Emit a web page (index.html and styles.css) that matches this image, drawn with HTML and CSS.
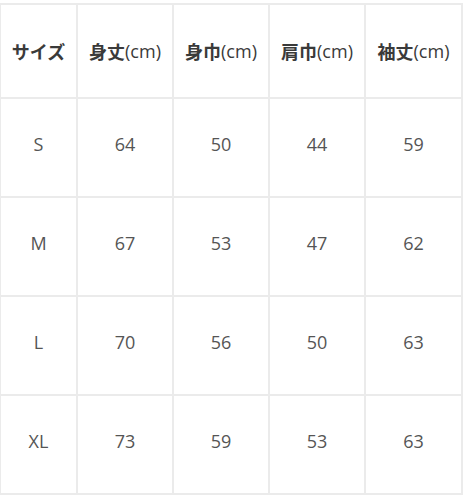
FILE: index.html
```html
<!DOCTYPE html>
<html lang="ja">
<head>
<meta charset="utf-8">
<link rel="stylesheet" href="styles.css">
</head>
<body>
<div class="size-table">
  <div class="cell head">サイズ</div>
  <div class="cell head">身丈<span class="unit">(cm)</span></div>
  <div class="cell head">身巾<span class="unit">(cm)</span></div>
  <div class="cell head">肩巾<span class="unit">(cm)</span></div>
  <div class="cell head">袖丈<span class="unit">(cm)</span></div>

  <div class="cell">S</div><div class="cell">64</div><div class="cell">50</div><div class="cell">44</div><div class="cell">59</div>
  <div class="cell">M</div><div class="cell">67</div><div class="cell">53</div><div class="cell">47</div><div class="cell">62</div>
  <div class="cell">L</div><div class="cell">70</div><div class="cell">56</div><div class="cell">50</div><div class="cell">63</div>
  <div class="cell">XL</div><div class="cell">73</div><div class="cell">59</div><div class="cell">53</div><div class="cell">63</div>
</div>
</body>
</html>
```
FILE: styles.css
```css
html, body {
  margin: 0;
  padding: 0;
  background: #ffffff;
}
.size-table {
  margin-top: 3px;
  display: grid;
  grid-template-columns: 77px 96px 96px 96px 97px;
  grid-template-rows: 94px 99px 99px 99px 99px;
  width: 463px;
  box-sizing: border-box;
  border-top: 2px solid #ebebeb;
  border-left: 1px solid #ebebeb;
  font-family: "Open Sans", "Noto Sans CJK JP", sans-serif;
  font-size: 18px;
  line-height: 1;
  color: #555555;
}
.cell {
  box-sizing: border-box;
  border-right: 2px solid #ebebeb;
  border-bottom: 2px solid #ebebeb;
  display: flex;
  align-items: center;
  justify-content: center;
  white-space: nowrap;
  padding-bottom: 7px;
}
.head {
  font-family: "Noto Sans CJK JP", sans-serif;
  font-weight: 700;
  color: #3a3a3a;
  font-size: 18px;
  padding-bottom: 0;
}
.unit {
  font-family: "Open Sans", sans-serif;
  font-weight: 400;
  font-size: 18px;
  color: #3a3a3a;
}
```
